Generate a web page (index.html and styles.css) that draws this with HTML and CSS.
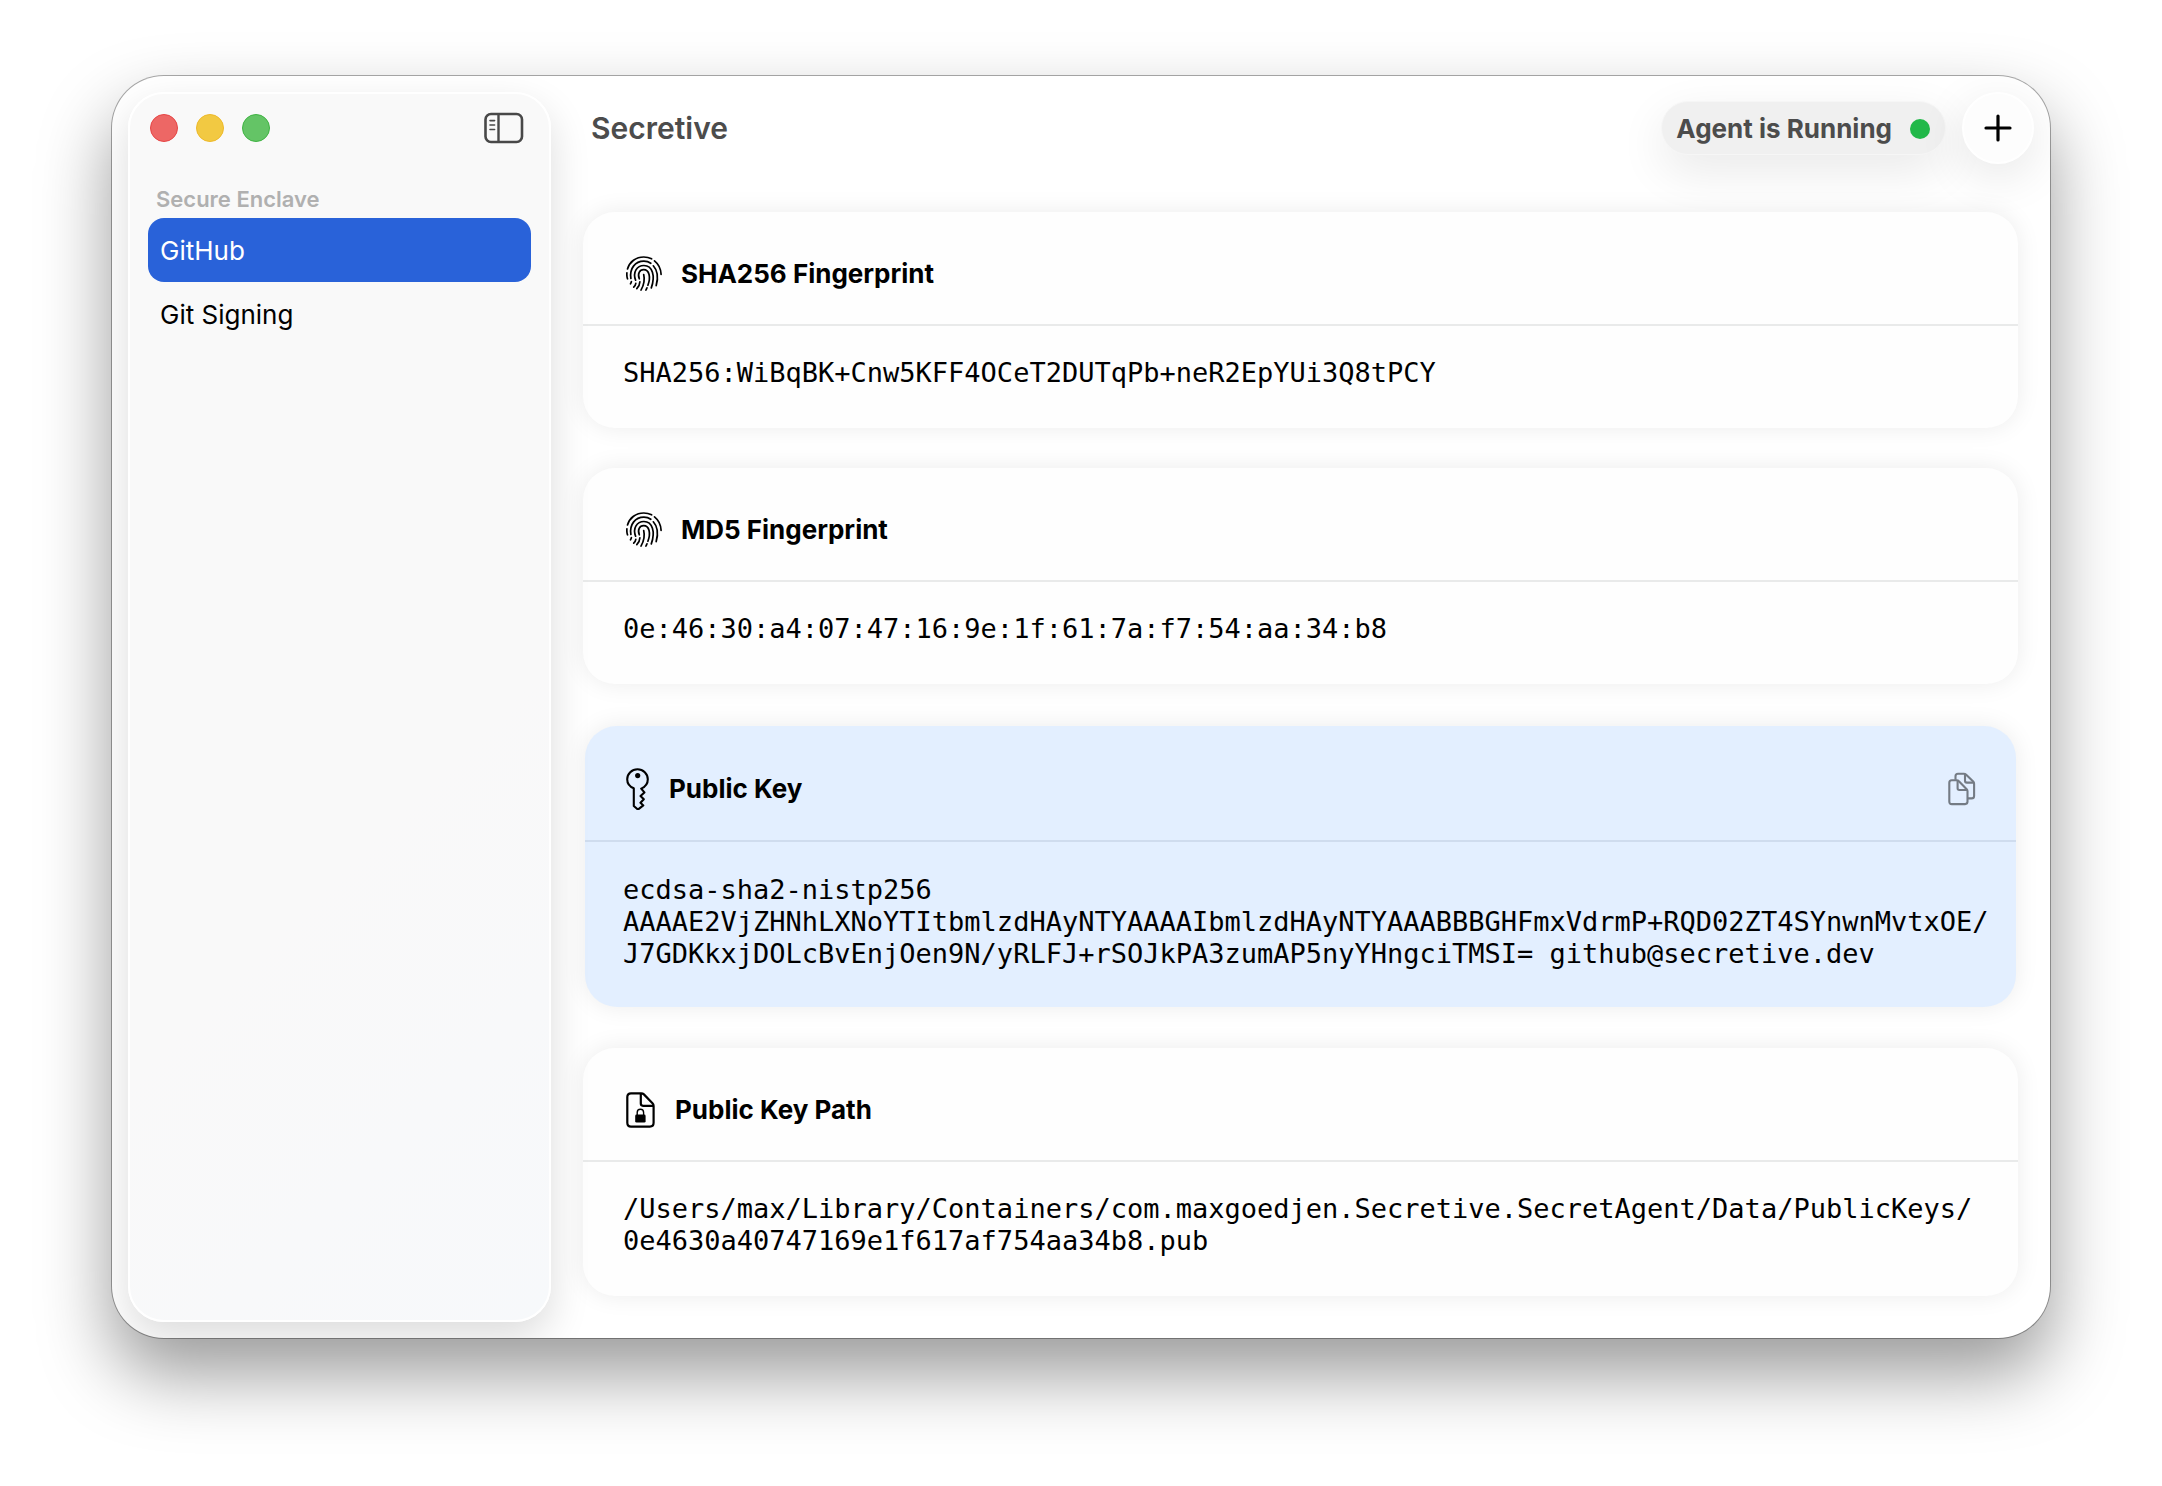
FILE: index.html
```html
<!DOCTYPE html>
<html lang="en">
<head>
<meta charset="utf-8">
<meta name="viewport" content="width=device-width, initial-scale=1">
<title>Secretive</title>
<link rel="stylesheet" href="styles.css">
</head>
<body>
<svg class="defs" aria-hidden="true">
  <symbol id="fingerprint" viewBox="0 0 36 36">
    <g fill="none" stroke="currentColor" stroke-width="1.7" stroke-linecap="round">
      <path d="M1.500 13C3.600 5.800 10 1 17.800 1c2.900 0 5.400.6 7.800 1.800"/>
      <path d="M28.500 4.800C32.500 8 34.900 12.600 35.100 18.400"/>
      <path d="M.9 16.800C.7 19 .9 21 1.500 22.800"/>
      <path d="M4.900 22.500C3.200 12.600 9.200 5.200 17.900 5.200c2.800 0 5 .8 6.900 2.100"/>
      <path d="M27.300 9.800C32 15 32.200 22.500 30.200 29.600"/>
      <path d="M5.400 25.600c0 .8-.4 1.500-.9 2.200"/>
      <path d="M9.600 24.200C6.600 16.200 10.800 9.500 17.900 9.500c8.700 0 11.600 10.500 7.400 22.400"/>
      <path d="M9.800 27.300c-.2 1.500-1 2.700-2.100 3.800"/>
      <path d="M13.300 22.800C11.300 17.500 13.500 13.700 17.700 13.700c5.700 0 7.200 7.800 4.200 15.600"/>
      <path d="M13.900 25.800c-.1 2.700-1.200 4.900-3.100 6.900"/>
      <path d="M21 31.800c-.3.800-.7 1.600-1.100 2.300"/>
      <path d="M17.700 18.500c1.300 5.500.2 10.600-2.700 15.600"/>
    </g>
  </symbol>
</svg>

<div class="window">
  <aside class="sidebar">
    <div class="sidebar-bar">
      <div class="lights">
        <button class="light close" aria-label="Close"></button>
        <button class="light minimize" aria-label="Minimize"></button>
        <button class="light zoom" aria-label="Zoom"></button>
      </div>
      <button class="icon-button" aria-label="Toggle sidebar">
        <svg width="40" height="32" viewBox="0 0 40 32" fill="none" stroke="#484848" stroke-linecap="round">
          <rect x="1.500" y="2" width="36.500" height="28" rx="5.500" stroke-width="2.600"/>
          <path d="M14.500 2v28" stroke-width="2.400" stroke-linecap="butt"/>
          <path d="M6 8.600h4.600M6 13h4.600M6 17.500h4.600" stroke-width="1.600"/>
        </svg>
      </button>
    </div>
    <h2 class="group">Secure Enclave</h2>
    <nav class="secrets" aria-label="Secure Enclave">
      <a class="secret selected" href="#github" aria-current="page">GitHub</a>
      <a class="secret" href="#git-signing">Git Signing</a>
    </nav>
  </aside>

  <main class="content">
    <header class="toolbar">
      <h1 class="title">Secretive</h1>
      <button class="agent">Agent is Running<span class="dot"></span></button>
      <button class="add" aria-label="New secret">
        <svg width="28" height="28" viewBox="0 0 28 28" fill="none" stroke="#000" stroke-width="3.200" stroke-linecap="round"><path d="M14 2v24M2 14h24"/></svg>
      </button>
    </header>

    <div class="cards">
      <section class="card">
        <div class="card-head">
          <svg width="36" height="36"><use href="#fingerprint"/></svg>
          <h3>SHA256 Fingerprint</h3>
        </div>
        <p class="value">SHA256:WiBqBK+Cnw5KFF4OCeT2DUTqPb+neR2EpYUi3Q8tPCY</p>
      </section>

      <section class="card">
        <div class="card-head">
          <svg width="36" height="36"><use href="#fingerprint"/></svg>
          <h3>MD5 Fingerprint</h3>
        </div>
        <p class="value">0e:46:30:a4:07:47:16:9e:1f:61:7a:f7:54:aa:34:b8</p>
      </section>

      <section class="card active">
        <div class="card-head">
          <svg width="24" height="42" viewBox="0 0 24 42" fill="none" stroke="#000" stroke-width="2.100" stroke-linejoin="round">
            <path d="M7.800 20.300C4 18.800 1.200 15.400 1.200 11.300 1.200 5.700 5.800 1.200 11.500 1.200S21.800 5.700 21.800 11.300c0 4.200-2.700 7.700-6.600 9.300l3.200 3.800-3.900 3.600 3.300 3.300-3.300 3.500 2.800 2.600-4.800 3.700c-.5.400-.8.400-1.200 0l-3.500-3.200z"/>
            <circle cx="11.700" cy="7.600" r="2.600" fill="#000" stroke="none"/>
          </svg>
          <h3>Public Key</h3>
          <button class="icon-button" aria-label="Copy public key">
            <svg width="28" height="34" viewBox="0 0 28 34" fill="none" stroke="#747b84" stroke-width="2.100" stroke-linejoin="round">
              <path d="M7.500 7.800V4.200c0-1.700.9-2.500 2.500-2.500h5.800c1 0 1.700.3 2.400 1l7 6.800c.6.600.9 1.300.9 2.200v12.200c0 1.700-.9 2.500-2.500 2.500h-3.600"/>
              <path d="M17 2v6.800c0 1.200.6 1.800 1.800 1.800h7"/>
              <path d="M3.800 8.200h4.800c1 0 1.700.3 2.300 1l7.800 8c.6.600.8 1.200.8 2.100v10.300c0 1.700-.8 2.500-2.400 2.500H3.800c-1.700 0-2.500-.8-2.500-2.500V10.700c0-1.700.8-2.500 2.500-2.500z"/>
              <path d="M9.600 8.500v7.800c0 1.200.5 1.700 1.700 1.700h7.900"/>
            </svg>
          </button>
        </div>
        <p class="value">ecdsa-sha2-nistp256<br>AAAAE2VjZHNhLXNoYTItbmlzdHAyNTYAAAAIbmlzdHAyNTYAAABBBGHFmxVdrmP+RQD02ZT4SYnwnMvtxOE/<br>J7GDKkxjDOLcBvEnjOen9N/yRLFJ+rSOJkPA3zumAP5nyYHngciTMSI= github@secretive.dev</p>
      </section>

      <section class="card">
        <div class="card-head">
          <svg width="30" height="36" viewBox="0 0 30 36" fill="none" stroke="#000" stroke-width="2.200" stroke-linejoin="round">
            <path d="M5 1.300h10.200c1.200 0 1.900.3 2.700 1.100l8.600 8.900c.8.800 1.100 1.500 1.100 2.700v16.800c0 2.500-1.300 3.800-3.700 3.800H5c-2.500 0-3.700-1.300-3.700-3.800V5.100C1.300 2.600 2.500 1.300 5 1.300z"/>
            <path d="M14.800 1.600v10c0 1.500.7 2.200 2.200 2.200h10.300"/>
            <rect x="9.200" y="22.600" width="10.400" height="8" rx="1.400" fill="#000" stroke="none"/>
            <path d="M11.200 23.400v-3c0-4.200 6.400-4.200 6.400 0v3" stroke-width="1.400"/>
          </svg>
          <h3>Public Key Path</h3>
        </div>
        <p class="value">/Users/max/Library/Containers/com.maxgoedjen.Secretive.SecretAgent/Data/PublicKeys/<br>0e4630a40747169e1f617af754aa34b8.pub</p>
      </section>
    </div>
  </main>
</div>
</body>
</html>
```
FILE: styles.css
```css
* {
  box-sizing: border-box;
}

body {
  margin: 0;
  padding: 76px 112px 148px;
  background: #fff;
  color: #000;
  font-family: Inter, "Liberation Sans", sans-serif;
  font-size: 26px;
  line-height: 32px;
}

h1, h2, h3, p {
  margin: 0;
}

button {
  margin: 0;
  padding: 0;
  border: 0;
  background: none;
  font: inherit;
  color: inherit;
}

svg {
  display: block;
  flex: none;
}

.defs {
  position: absolute;
  width: 0;
  height: 0;
}

.window {
  display: flex;
  overflow: hidden;
  border-radius: 52px;
  background: #fff;
  box-shadow: 0 0 0 1px rgba(0, 0, 0, .32), 0 36px 72px rgba(0, 0, 0, .4);
}

/* Sidebar */

.sidebar {
  position: relative;
  z-index: 1;
  flex: none;
  width: 423px;
  margin: 16px 0 16px 16px;
  padding: 18px 18px;
  border: 2px solid #fff;
  border-radius: 36px;
  background: linear-gradient(135deg, #f9f9f9 60%, #f7f9fb);
  box-shadow: 0 16px 40px rgba(0, 0, 0, .14);
}

.sidebar-bar {
  display: flex;
  align-items: center;
  justify-content: space-between;
  height: 32px;
  padding: 0 7px 0 2px;
}

.lights {
  display: flex;
  gap: 18px;
}

.light {
  width: 28px;
  height: 28px;
  border: 1px solid;
  border-radius: 50%;
}

.close {
  border-color: #e64545;
  background: #ed6765;
}

.minimize {
  border-color: #edb92a;
  background: #f2c942;
}

.zoom {
  border-color: #3fb343;
  background: #64c466;
}

.group {
  margin-top: 37px;
  padding: 0 8px 1px;
  color: #b0b0b0;
  font-size: 22px;
  font-weight: 600;
  line-height: 36px;
}

.secret {
  display: block;
  padding: 17px 12px 15px;
  border-radius: 16px;
  color: #000;
  text-decoration: none;
}

.secret.selected {
  background: #2962d9;
  color: #fff;
}

/* Toolbar */

.content {
  flex: 1;
  min-width: 0;
  padding: 16px 32px 42px;
}

.toolbar {
  display: flex;
  align-items: center;
  height: 72px;
  margin-right: -16px;
  padding-left: 8px;
  color: #4c4c4c;
}

.title {
  flex: 1;
  font-size: 30px;
  font-weight: 600;
}

.agent {
  display: flex;
  align-items: center;
  gap: 18px;
  height: 54px;
  margin-right: 16px;
  padding: 1px 15px 0 14px;
  border: 1px solid #f6f6f6;
  border-radius: 27px;
  background: #f0f0f0;
  box-shadow: 0 16px 48px rgba(0, 0, 0, .09);
  font-weight: 700;
}

.dot {
  width: 20px;
  height: 20px;
  border-radius: 50%;
  background: #21b849;
}

.add {
  display: grid;
  place-items: center;
  width: 72px;
  height: 72px;
  border: 2px solid #fff;
  border-radius: 50%;
  background: #fdfdfd;
  box-shadow: 0 12px 48px rgba(0, 0, 0, .1);
}

/* Cards */

.cards {
  display: grid;
  gap: 40px;
  margin-top: 48px;
}

.card {
  position: relative;
  border-radius: 32px;
  background: #fefefe;
  box-shadow: 0 0 24px rgba(0, 0, 0, .08);
}

.card-head {
  display: flex;
  align-items: center;
  gap: 19px;
  height: 114px;
  padding: 12px 40px 0 43px;
  border-bottom: 2px solid #e9eaea;
}

.card-head h3 {
  flex: 1;
  font-size: 26px;
  font-weight: 700;
}

.value {
  padding: 31px 0 39px 40px;
  font-family: "DejaVu Sans Mono", "Liberation Mono", monospace;
  font-size: 27px;
  white-space: nowrap;
}

.card.active {
  margin: 2px 2px 1px;
  background: #e3efff;
}

.active .card-head {
  height: 116px;
  padding-left: 41px;
  border-bottom-color: #cfdcee;
}

.active .value {
  padding: 32px 0 37px 38px;
}
```
